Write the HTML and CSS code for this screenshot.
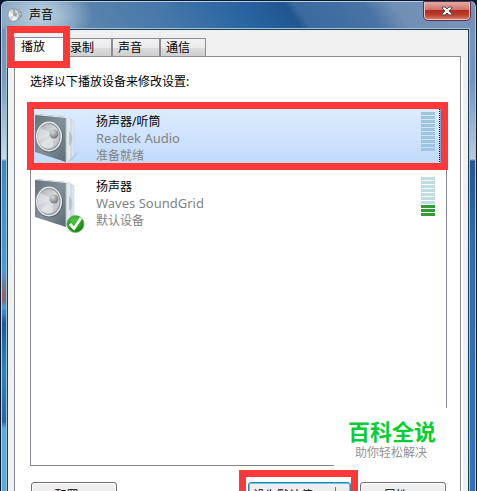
FILE: index.html
```html
<!DOCTYPE html>
<html lang="zh-CN">
<head>
<meta charset="utf-8">
<title>声音</title>
<link rel="stylesheet" href="styles.css">
</head>
<body>
<svg class="defs" aria-hidden="true">
  <defs>
    <linearGradient id="face" x1="0" y1="0" x2="1" y2="1">
      <stop offset="0" stop-color="#66737b"/><stop offset=".5" stop-color="#82909a"/><stop offset="1" stop-color="#5b6b75"/>
    </linearGradient>
    <linearGradient id="side" x1="0" y1="0" x2="1" y2="0">
      <stop offset="0" stop-color="#ffffff"/><stop offset=".5" stop-color="#c8d5e2"/><stop offset="1" stop-color="#e6f0fa"/>
    </linearGradient>
    <linearGradient id="cone" x1="0" y1="0" x2="1" y2="1">
      <stop offset="0" stop-color="#a4a8ad"/><stop offset=".5" stop-color="#d9dce0"/><stop offset="1" stop-color="#b4b8bd"/>
    </linearGradient>
    <radialGradient id="cap" cx=".35" cy=".3" r=".7">
      <stop offset="0" stop-color="#d8dbde"/><stop offset="1" stop-color="#757b81"/>
    </radialGradient>
    <radialGradient id="ok" cx=".4" cy=".3" r=".8">
      <stop offset="0" stop-color="#55c944"/><stop offset="1" stop-color="#087a08"/>
    </radialGradient>
    <symbol id="speaker" viewBox="0 0 50 50">
      <path d="M34 44 44 37 38 46 32 48z" fill="#8095aa" opacity=".2"/>
      <path d="M33 3 39 7V41L33 47z" fill="url(#side)" stroke="#c3cfda" stroke-width=".6"/>
      <path d="M35 18q4 5 1 12l-2 2V17z" fill="#b5c3d2"/>
      <path d="M0 0 31 3V48L0 38z" fill="url(#face)"/>
      <path d="M0 0 31 3 34 4V47L31 48V4L0 1z" fill="#e4e8eb"/>
      <path d="M31 4V47" stroke="#b0bac2" stroke-width="1"/>
      <ellipse cx="14.500" cy="23" rx="13.500" ry="15.500" fill="#5c6973"/>
      <ellipse cx="14" cy="22.500" rx="13" ry="15" fill="#e8eaec"/>
      <ellipse cx="14" cy="22.500" rx="11.500" ry="13.500" fill="#8d9298"/>
      <ellipse cx="13.500" cy="22.500" rx="11" ry="12.500" fill="url(#cone)"/>
      <path d="M18 20 5 14Q2 19 3 26z" fill="#eef0f2" opacity=".5"/>
      <path d="M18 21 6 31Q11 36 18 33z" fill="#f0f2f3" opacity=".5"/>
      <circle cx="19" cy="20" r="4.500" fill="url(#cap)"/>
    </symbol>
  </defs>
</svg>
<div class="window">
  <header class="titlebar">
    <svg class="app-icon" viewBox="0 0 16 16" aria-hidden="true">
      <path d="M8 2 13 3 15 8 13 12 8 14z" fill="#d9dfe4" stroke="#7d8b97" stroke-width=".7"/>
      <path d="M11 4 14 6M11 12 14 9M11 8H15" stroke="#798895" stroke-width="1"/>
      <ellipse cx="6.500" cy="8" rx="5.700" ry="6.500" fill="#d5d9dc" stroke="#8e989f"/>
      <path d="M7 8 2 4 2 10zM7 8 5 14 10 12z" fill="#f3f5f6"/>
      <path d="M7 8 5 2 9 2z" fill="#a7b0b5"/>
      <circle cx="8" cy="7.500" r="2" fill="#9da5ab"/>
    </svg>
    <h1 class="title">声音</h1>
    <button class="close" type="button" aria-label="关闭">
      <svg viewBox="0 0 12 10" aria-hidden="true"><path d="M1 1H4L6 3 8 1H11V2L8 5 11 8V9H8L6 7 4 9H1V8L4 5 1 2z" fill="#f5f5f5" stroke="#4f4c5b"/></svg>
    </button>
  </header>
  <main class="client">
    <div class="tabs" role="tablist">
      <button class="tab active marked" type="button" role="tab" aria-selected="true">播放</button>
      <button class="tab" type="button" role="tab">录制</button>
      <button class="tab" type="button" role="tab">声音</button>
      <button class="tab" type="button" role="tab">通信</button>
    </div>
    <section class="panel" role="tabpanel">
      <p class="hint">选择以下播放设备来修改设置:</p>
      <div class="list-wrap">
        <ul class="devices">
          <li class="device selected marked">
            <svg class="speaker" aria-hidden="true"><use href="#speaker"/></svg>
            <div class="info"><strong>扬声器/听筒</strong><span>Realtek Audio</span><span>准备就绪</span></div>
            <div class="meter"><i></i><i></i><i></i><i></i><i></i><i></i><i></i><i></i><i></i><i></i></div>
          </li>
          <li class="device">
            <svg class="speaker" viewBox="0 0 50 56" aria-hidden="true">
              <use href="#speaker" width="50" height="50"/>
              <circle cx="40.500" cy="45" r="8.500" fill="url(#ok)" stroke="#62b158" stroke-width=".7"/>
              <path d="M35 45 39 49.500 46 39" fill="none" stroke="#fff" stroke-width="2.800"/>
            </svg>
            <div class="info"><strong>扬声器</strong><span>Waves SoundGrid</span><span>默认设备</span></div>
            <div class="meter"><i></i><i></i><i></i><i></i><i></i><i></i><i></i><i class="on"></i><i class="on"></i><i class="on"></i></div>
          </li>
        </ul>
        <div class="watermark"><b>百科全说</b><span>助你轻松解决</span></div>
      </div>
      <div class="actions">
        <button class="btn configure" type="button">配置(C)</button>
        <button class="btn default marked" type="button"><span>设为默认值(S)</span><span class="split"></span></button>
        <button class="btn" type="button">属性(P)</button>
      </div>
    </section>
  </main>
</div>
</body>
</html>
```
FILE: styles.css
```css
* { box-sizing: border-box; }
html, body { height: 100%; }
body {
  margin: 0;
  overflow: hidden;
  background: #06142c;
  color: #000;
  font: 12px/17px "Noto Sans", "Noto Sans CJK SC", sans-serif;
}
button { font: inherit; color: inherit; margin: 0; }
.defs { position: absolute; width: 0; height: 0; }

.window {
  min-height: 100%;
  padding: 0 7px 7px 6px;
  border: 1px solid #071a32;
  border-radius: 7px 7px 0 0;
  box-shadow: inset 1px 1px #b9cede, inset -1px 0 #a9c9e3;
  background:
    linear-gradient(#7090b8, #7b9cbd 80px, #c9dbe5 158px, #4389b9 160px, #4c9cd0 270px, #8c6670 292px, #8c6670 299px, #4c9cd0 306px, #205894 322px, #2a86be 370px, #2c649e 421px, #59acd8 427px) left / 8px 100% no-repeat,
    linear-gradient(#7693b8, #6f94c2 80px, #b9cbdb 158px, #205894 160px, #2c6ead 240px, #2d76b8) right / 8px 100% no-repeat,
    #5f87b1;
}

.titlebar {
  display: flex;
  align-items: center;
  height: 27px;
  margin: 1px -6px 0 -5px;
  padding: 0 1px 2px 5px;
  border-radius: 6px 6px 0 0;
  background:
    radial-gradient(ellipse 52px 34px at 38px 13px, #c2d4e2, #b5cbdca0 50%, transparent),
    linear-gradient(55deg, #7898b9 0 3%, #5681ac 22%, #4578aa 35%, #2863a0 52%, #215690 61%, #3a6a9f 63%, #4873a5 77%, #718fb5 83%, #7892b7);
}
.app-icon { width: 16px; height: 16px; }
.title { margin: 0 0 0 6px; font-size: 12px; font-weight: 400; }
.close {
  display: grid;
  place-items: center;
  align-self: flex-start;
  width: 46px;
  height: 18px;
  margin-left: auto;
  margin-right: 4px;
  padding: 0;
  border: 1px solid #f0c5bf;
  border-top: 0;
  border-radius: 0 0 4px 4px;
  outline: 1px solid #56354c;
  background: linear-gradient(#e5aaa2, #cd7064 48%, #af2d20 50%, #bd3b2b 75%, #d57963);
}
.close svg { width: 12px; height: 10px; }

.client {
  padding: 7px 7px 8px 6px;
  border: 1px solid #1c3c58;
  box-shadow: 0 0 0 1px #a1c4d6;
  background: #f0f0f0;
}

.tabs { display: flex; align-items: flex-end; height: 19px; }
.tab {
  width: 48px;
  height: 18px;
  padding: 0 0 0 5px;
  border: 1px solid #898c95;
  border-bottom: 0;
  background: linear-gradient(#f2f2f2, #ebebeb 50%, #dcdcdc 50%, #cfcfcf);
  text-align: left;
}
.tab:last-child { width: 46px; }
.tab.active {
  z-index: 2;
  width: 50px;
  height: 20px;
  padding: 0 0 2px 6px;
  margin-bottom: -1px;
  background: #fff;
}

.marked { position: relative; }
.marked::after {
  content: "";
  position: absolute;
  z-index: 3;
  border: 7px solid #fc3838;
  pointer-events: none;
}
.tab.marked::after { inset: -12px -7px -11px -8px; }
.device.marked::after { inset: -4px -8px 0 -4px; }
.btn.marked::after { inset: -13px -8px -13px -10px; }

.panel {
  padding: 16px 13px 14px 15px;
  border: 1px solid #898c95;
  box-shadow: 2px 2px #fff;
  background: #fff;
}
.hint { margin: 0 0 15px; }
.list-wrap { position: relative; }
.devices {
  min-height: 361px;
  margin: 0;
  padding: 0 5px 0 0;
  border: 1px solid #828790;
  list-style: none;
}
.device { display: flex; height: 64px; margin-bottom: 1px; padding: 6px 5px 0 4px; }
.device.selected {
  border-right: 1px solid #7da2ce;
  padding-right: 4px;
  background: linear-gradient(#dcebfc 5%, #c1dbfc 88%);
}
.device.selected .meter { position: relative; }
.device.selected .meter::after {
  content: "";
  position: absolute;
  top: -6px;
  right: -4px;
  height: 62px;
  border-right: 1px dotted #000;
}
.speaker { width: 50px; height: 50px; margin-top: 2px; overflow: visible; }
.device:not(.selected) .speaker { height: 56px; }
.info { display: flex; flex: 1; flex-direction: column; margin-left: 11px; padding-top: 1px; }
.info strong { font-weight: 400; }
.info span { color: #838383; }
.info span:nth-child(2) { font-size: 13px; }
.meter { display: grid; grid-auto-rows: 3px; align-content: start; gap: 1px; width: 15px; }
.meter i { width: 14px; background: #c0dce4; }
.meter i.on { background: #339b33; }
.selected .meter i { background: #9cc6df; }

.watermark {
  position: absolute;
  right: -13px;
  bottom: -5px;
  display: flex;
  flex-direction: column;
  width: 126px;
  height: 63px;
  padding: 8px 0 0 14px;
  background: #fff;
}
.watermark b { color: #08ce32; font-size: 22px; line-height: 30px; font-weight: 700; }
.watermark span { padding-left: 7px; color: #929292; font-size: 12px; line-height: 14px; }

.actions { display: flex; gap: 9px; margin: 16px 1px 0; }
.btn {
  width: 86px;
  height: 23px;
  padding: 4px 0 0;
  border: 1px solid #707070;
  border-radius: 3px;
  box-shadow: inset 0 0 0 1px #fcfcfc;
  background: linear-gradient(#f2f2f2, #ebebeb 50%, #ddd 50%, #cfcfcf);
}
.configure { margin-right: auto; }
.default {
  display: flex;
  align-items: center;
  width: 103px;
  padding-left: 4px;
  border-color: #3c7fb1;
  box-shadow: inset 0 0 0 1px #48d0f5;
}
.default span:first-child { white-space: nowrap; }
.split { flex: none; width: 15px; height: 17px; margin-left: auto; border-left: 1px solid #707070; }
```
